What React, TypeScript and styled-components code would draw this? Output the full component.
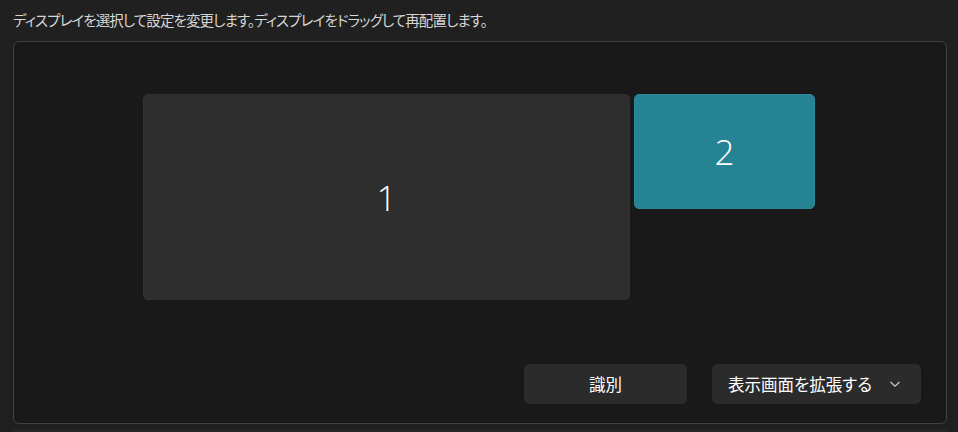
import React from 'react';
import styled, { createGlobalStyle } from 'styled-components';

const GlobalStyle = createGlobalStyle`
  html, body {
    margin: 0;
    padding: 0;
    background: #202020;
    overflow: hidden;
  }
  body {
    font-family: "Noto Sans CJK JP", "Noto Sans", sans-serif;
    color: #ffffff;
  }
`;

const Page = styled.div`
  width: 958px;
  height: 432px;
  display: flex;
  flex-direction: column;
`;

const Caption = styled.div`
  height: 41px;
  box-sizing: border-box;
  padding: 9px 0 0 13px;
  font-size: 14.5px;
  line-height: 22px;
  color: #d6d6d6;
  font-feature-settings: "palt";
  letter-spacing: -0.9px;
  white-space: nowrap;
`;

const Panel = styled.div`
  margin: 0 11px 0 13px;
  height: 383px;
  box-sizing: border-box;
  border: 1px solid #424242;
  border-radius: 6px;
  background: #191919;
  display: flex;
  flex-direction: column;
`;

const Arrangement = styled.div`
  flex: 1;
  display: flex;
  justify-content: center;
  align-items: flex-start;
  gap: 4px;
  padding: 52px 2px 0 0;
`;

const Monitor = styled.div<{ $w: number; $h: number; $active?: boolean }>`
  width: ${p => p.$w}px;
  height: ${p => p.$h}px;
  border-radius: 5px;
  background: ${p => (p.$active ? '#258393' : '#2e2e2e')};
  border: 1px solid ${p => (p.$active ? '#2a8a9a' : '#323232')};
  box-sizing: border-box;
  display: flex;
  align-items: center;
  justify-content: center;
  font-family: "Open Sans", "Noto Sans", sans-serif;
  font-weight: 300;
  font-size: 35px;
  color: #ffffff;
`;

const Actions = styled.div`
  display: flex;
  justify-content: flex-end;
  gap: 25px;
  padding: 0 25px 19px 0;
`;

const Button = styled.button<{ $w: number }>`
  width: ${p => p.$w}px;
  height: 40px;
  border: none;
  border-radius: 5px;
  background: #2b2b2b;
  color: #ffffff;
  font-family: "Noto Sans CJK JP", sans-serif;
  font-size: 16.5px;
  font-feature-settings: "palt";
  display: flex;
  align-items: center;
  justify-content: center;
  padding: 0;
`;

const SelectButton = styled(Button)`
  justify-content: space-between;
  padding: 0 20px 0 16px;
`;

const NextCard = styled.div`
  margin: 5px 11px 0 13px;
  flex: 1;
  background: #262626;
  border-radius: 6px 6px 0 0;
`;

const Chevron = () => (
  <svg width="12" height="8" viewBox="0 0 12 8" fill="none">
    <path d="M1.5 2 L6 6.2 L10.5 2" stroke="#d0d0d0" strokeWidth="1.1" />
  </svg>
);

export default function App() {
  return (
    <Page>
      <GlobalStyle />
      <Caption>ディスプレイを選択して設定を変更します。ディスプレイをドラッグして再配置します。</Caption>
      <Panel>
        <Arrangement>
          <Monitor $w={487} $h={206}>1</Monitor>
          <Monitor $w={181} $h={115} $active>2</Monitor>
        </Arrangement>
        <Actions>
          <Button $w={163}>識別</Button>
          <SelectButton $w={209}>
            <span>表示画面を拡張する</span>
            <Chevron />
          </SelectButton>
        </Actions>
      </Panel>
      <NextCard />
    </Page>
  );
}
